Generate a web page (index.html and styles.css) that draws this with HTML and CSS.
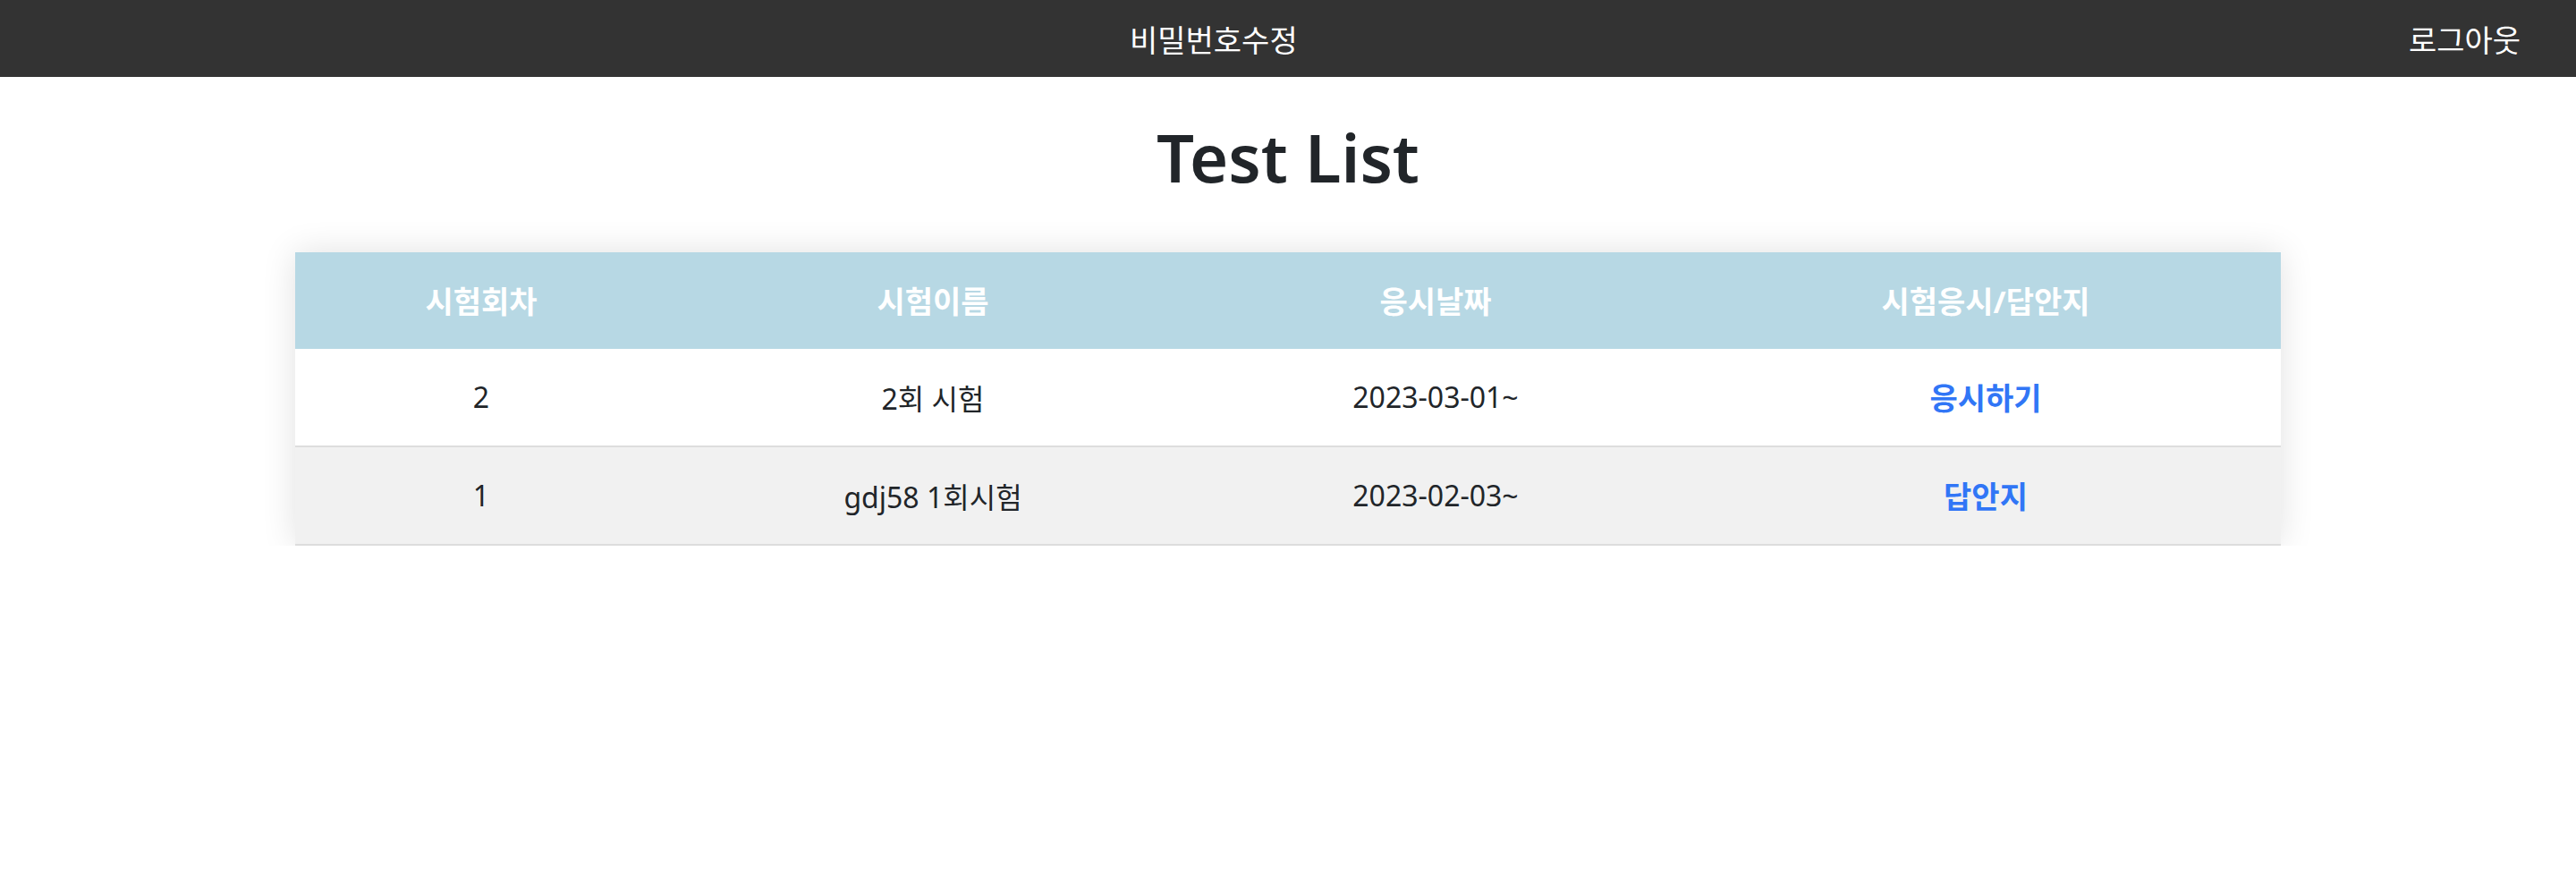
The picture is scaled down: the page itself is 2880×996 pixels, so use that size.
FILE: index.html
```html
<!DOCTYPE html>
<html lang="ko">
<head>
<meta charset="utf-8">
<title>Test List</title>
<link rel="stylesheet" href="styles.css">
</head>
<body>
<nav class="topbar">
  <a class="nav-center" href="#">비밀번호수정</a>
  <a class="nav-right" href="#">로그아웃</a>
</nav>
<main class="page">
  <h1 class="title">Test List</h1>
  <table class="test-table">
    <colgroup>
      <col class="c1"><col class="c2"><col class="c3"><col class="c4">
    </colgroup>
    <thead>
      <tr>
        <th>시험회차</th>
        <th>시험이름</th>
        <th>응시날짜</th>
        <th class="last">시험응시/답안지</th>
      </tr>
    </thead>
    <tbody>
      <tr>
        <td>2</td>
        <td>2회 시험</td>
        <td>2023-03-01~</td>
        <td class="last"><a class="link" href="#">응시하기</a></td>
      </tr>
      <tr class="alt">
        <td>1</td>
        <td>gdj58 1회시험</td>
        <td>2023-02-03~</td>
        <td class="last"><a class="link" href="#">답안지</a></td>
      </tr>
    </tbody>
  </table>
</main>
</body>
</html>
```

FILE: styles.css
```css
html, body {
  margin: 0;
  padding: 0;
  background: #ffffff;
  font-family: "Noto Sans", "Noto Sans CJK KR", sans-serif;
  color: #212529;
}

.topbar {
  display: flex;
  align-items: center;
  height: 86px;
  background: #333333;
}

.topbar a {
  color: #ffffff;
  text-decoration: none;
  font-size: 34px;
}

.nav-center {
  margin-left: 1263px;
}

.nav-right {
  margin-left: auto;
  padding-right: 62px;
}

.page {
  padding-top: 46px;
}

.title {
  margin: 0 0 61px 0;
  text-align: center;
  font-size: 74px;
  line-height: 1.2;
  font-weight: 600;
  color: #212529;
}

.test-table {
  margin: 0 auto;
  width: 2220px;
  table-layout: fixed;
  border-collapse: separate;
  border-spacing: 0;
  box-shadow: 0 0 36px rgba(0, 0, 0, 0.12);
  font-size: 32px;
}

.c1 { width: 416px; }
.c2 { width: 594px; }
.c3 { width: 530px; }
.c4 { width: 680px; }

.test-table th,
.test-table td {
  padding: 0;
  height: 108px;
  text-align: center;
  vertical-align: middle;
}

.test-table th {
  background: #b7d8e4;
  color: #ffffff;
  font-weight: 700;
  font-size: 34px;
}

.test-table td {
  background: #ffffff;
  border-bottom: 2px solid #dddddd;
  font-weight: 400;
}

.test-table .alt td {
  background: #f1f1f1;
}

.test-table .last {
  padding-left: 20px;
}

.link {
  color: #3176f6;
  font-weight: 700;
  font-size: 34px;
  text-decoration: none;
}
```
